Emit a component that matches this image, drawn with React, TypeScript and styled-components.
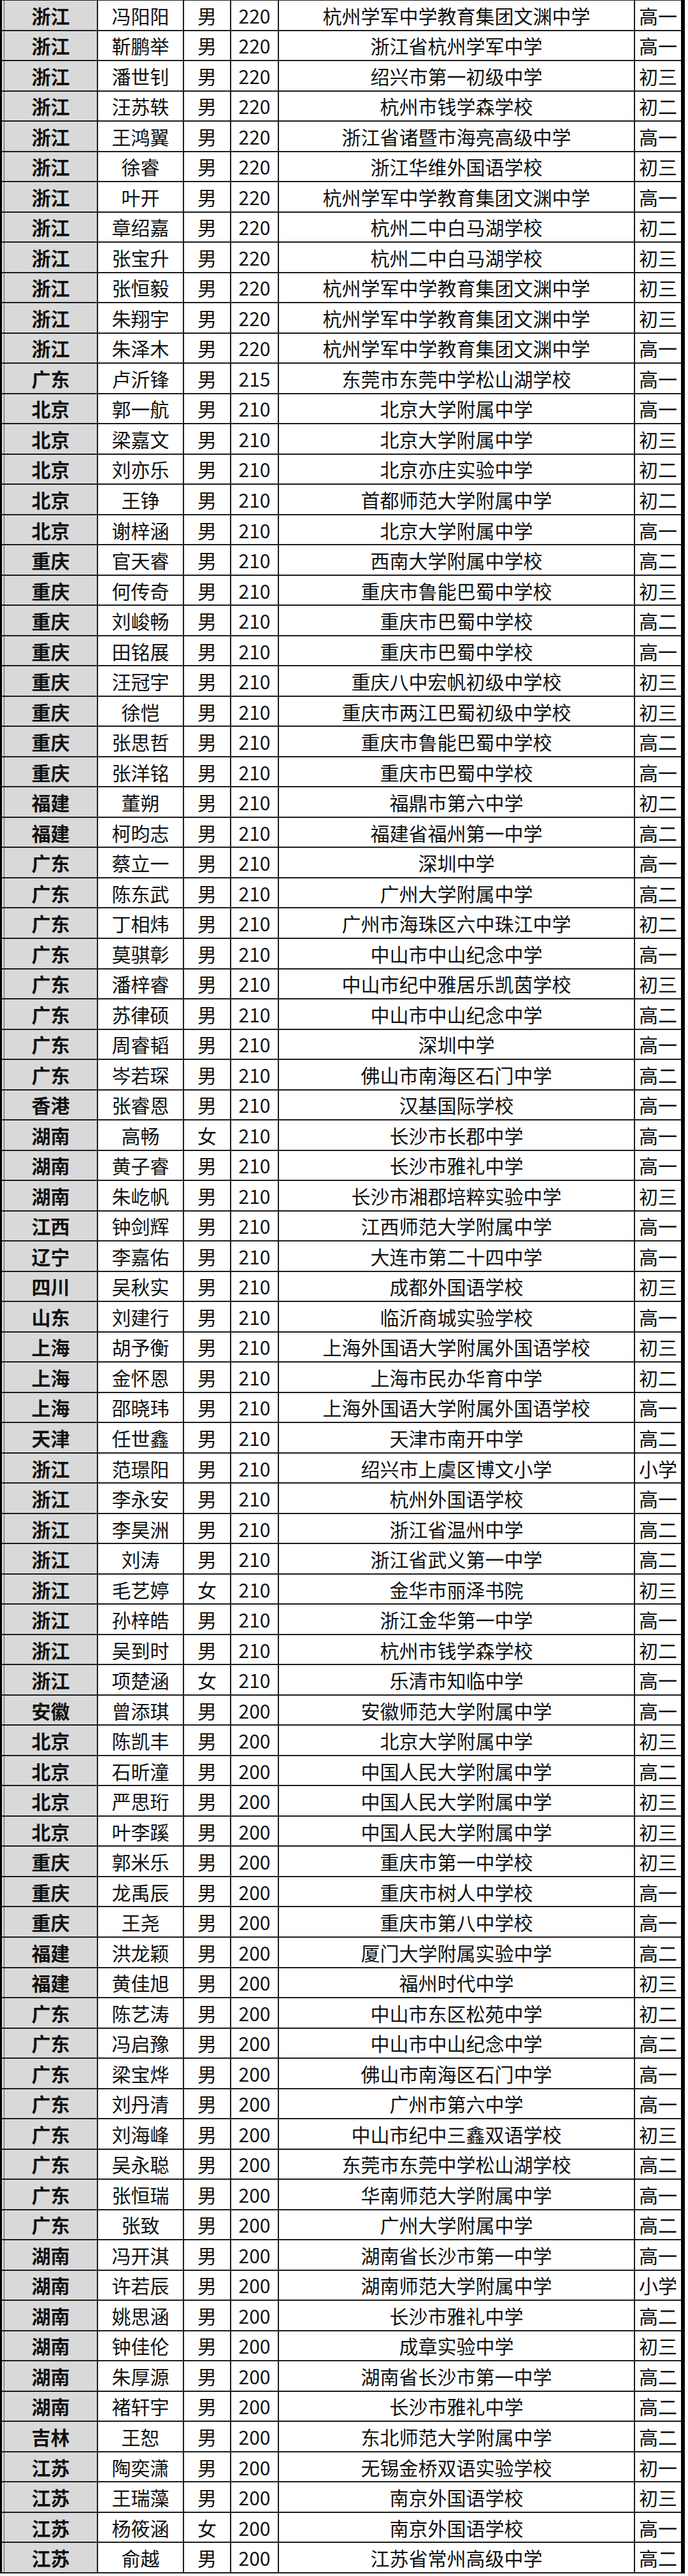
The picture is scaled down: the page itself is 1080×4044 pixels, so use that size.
import React from "react";
import styled, { createGlobalStyle } from "styled-components";

const GlobalStyle = createGlobalStyle`
  html, body {
    margin: 0;
    padding: 0;
    background: #ffffff;
  }
  body {
    font-family: "Noto Sans CJK SC", "Noto Sans", "Liberation Sans", sans-serif;
    color: #111111;
  }
`;

type Row = [string, string, string, string, string, string];

const raw = `浙江 冯阳阳 男 220 杭州学军中学教育集团文渊中学 高一
浙江 靳鹏举 男 220 浙江省杭州学军中学 高一
浙江 潘世钊 男 220 绍兴市第一初级中学 初三
浙江 汪苏轶 男 220 杭州市钱学森学校 初二
浙江 王鸿翼 男 220 浙江省诸暨市海亮高级中学 高一
浙江 徐睿 男 220 浙江华维外国语学校 初三
浙江 叶开 男 220 杭州学军中学教育集团文渊中学 高一
浙江 章绍嘉 男 220 杭州二中白马湖学校 初二
浙江 张宝升 男 220 杭州二中白马湖学校 初三
浙江 张恒毅 男 220 杭州学军中学教育集团文渊中学 初三
浙江 朱翔宇 男 220 杭州学军中学教育集团文渊中学 初三
浙江 朱泽木 男 220 杭州学军中学教育集团文渊中学 高一
广东 卢沂锋 男 215 东莞市东莞中学松山湖学校 高一
北京 郭一航 男 210 北京大学附属中学 高一
北京 梁嘉文 男 210 北京大学附属中学 初三
北京 刘亦乐 男 210 北京亦庄实验中学 初二
北京 王铮 男 210 首都师范大学附属中学 初二
北京 谢梓涵 男 210 北京大学附属中学 高一
重庆 官天睿 男 210 西南大学附属中学校 高二
重庆 何传奇 男 210 重庆市鲁能巴蜀中学校 初三
重庆 刘峻畅 男 210 重庆市巴蜀中学校 高二
重庆 田铭展 男 210 重庆市巴蜀中学校 高一
重庆 汪冠宇 男 210 重庆八中宏帆初级中学校 初三
重庆 徐恺 男 210 重庆市两江巴蜀初级中学校 初三
重庆 张思哲 男 210 重庆市鲁能巴蜀中学校 高二
重庆 张洋铭 男 210 重庆市巴蜀中学校 高一
福建 董朔 男 210 福鼎市第六中学 初二
福建 柯昀志 男 210 福建省福州第一中学 高二
广东 蔡立一 男 210 深圳中学 高一
广东 陈东武 男 210 广州大学附属中学 高二
广东 丁相炜 男 210 广州市海珠区六中珠江中学 初二
广东 莫骐彰 男 210 中山市中山纪念中学 高一
广东 潘梓睿 男 210 中山市纪中雅居乐凯茵学校 初三
广东 苏律硕 男 210 中山市中山纪念中学 高二
广东 周睿韬 男 210 深圳中学 高一
广东 岑若琛 男 210 佛山市南海区石门中学 高二
香港 张睿恩 男 210 汉基国际学校 高一
湖南 高畅 女 210 长沙市长郡中学 高一
湖南 黄子睿 男 210 长沙市雅礼中学 高一
湖南 朱屹帆 男 210 长沙市湘郡培粹实验中学 初三
江西 钟剑辉 男 210 江西师范大学附属中学 高一
辽宁 李嘉佑 男 210 大连市第二十四中学 高一
四川 吴秋实 男 210 成都外国语学校 初三
山东 刘建行 男 210 临沂商城实验学校 高一
上海 胡予衡 男 210 上海外国语大学附属外国语学校 初三
上海 金怀恩 男 210 上海市民办华育中学 初二
上海 邵晓玮 男 210 上海外国语大学附属外国语学校 高一
天津 任世鑫 男 210 天津市南开中学 高二
浙江 范璟阳 男 210 绍兴市上虞区博文小学 小学
浙江 李永安 男 210 杭州外国语学校 高一
浙江 李昊洲 男 210 浙江省温州中学 高二
浙江 刘涛 男 210 浙江省武义第一中学 高二
浙江 毛艺婷 女 210 金华市丽泽书院 初三
浙江 孙梓皓 男 210 浙江金华第一中学 高一
浙江 吴到时 男 210 杭州市钱学森学校 初二
浙江 项楚涵 女 210 乐清市知临中学 高一
安徽 曾添琪 男 200 安徽师范大学附属中学 高一
北京 陈凯丰 男 200 北京大学附属中学 初三
北京 石昕潼 男 200 中国人民大学附属中学 高二
北京 严思珩 男 200 中国人民大学附属中学 初三
北京 叶李蹊 男 200 中国人民大学附属中学 初三
重庆 郭米乐 男 200 重庆市第一中学校 初三
重庆 龙禹辰 男 200 重庆市树人中学校 高一
重庆 王尧 男 200 重庆市第八中学校 高一
福建 洪龙颖 男 200 厦门大学附属实验中学 高二
福建 黄佳旭 男 200 福州时代中学 初三
广东 陈艺涛 男 200 中山市东区松苑中学 初二
广东 冯启豫 男 200 中山市中山纪念中学 高二
广东 梁宝烨 男 200 佛山市南海区石门中学 高一
广东 刘丹清 男 200 广州市第六中学 高一
广东 刘海峰 男 200 中山市纪中三鑫双语学校 初三
广东 吴永聪 男 200 东莞市东莞中学松山湖学校 高二
广东 张恒瑞 男 200 华南师范大学附属中学 高一
广东 张致 男 200 广州大学附属中学 高二
湖南 冯开淇 男 200 湖南省长沙市第一中学 高一
湖南 许若辰 男 200 湖南师范大学附属中学 小学
湖南 姚思涵 男 200 长沙市雅礼中学 高二
湖南 钟佳伦 男 200 成章实验中学 初三
湖南 朱厚源 男 200 湖南省长沙市第一中学 高二
湖南 褚轩宇 男 200 长沙市雅礼中学 高二
吉林 王恕 男 200 东北师范大学附属中学 高二
江苏 陶奕潇 男 200 无锡金桥双语实验学校 初一
江苏 王瑞藻 男 200 南京外国语学校 初三
江苏 杨筱涵 女 200 南京外国语学校 高一
江苏 俞越 男 200 江苏省常州高级中学 高二`;

const rows: Row[] = raw.split("\n").map((l) => l.trim().split(/\s+/) as Row);

const Page = styled.div`
  width: 1080px;
  min-height: 4044px;
  background: #ffffff;
`;

const Table = styled.div`
  width: 1075px;
  box-sizing: border-box;
  border-left: 3px solid #000000;
  border-right: 6px solid #000000;
  border-top: 1.5px solid #1e1e1e;
  display: flex;
  flex-direction: column;
`;

const RowLine = styled.div`
  display: grid;
  grid-template-columns: 151px 135px 74px 75px 559px 72px;
  height: 47.52px;
  box-sizing: border-box;
  border-bottom: 2.5px solid #1c1c1c;
`;

const Cell = styled.div<{ $head?: boolean; $last?: boolean }>`
  box-sizing: border-box;
  display: flex;
  align-items: center;
  justify-content: center;
  white-space: nowrap;
  overflow: hidden;
  font-size: 30px;
  line-height: 1;
  color: #111111;
  font-weight: ${(p) => (p.$head ? 700 : 400)};
  background: ${(p) =>
    p.$head
      ? "linear-gradient(to right, #d9d9d9 0, #d9d9d9 3px, #5a5a5a 3px, #5a5a5a 4px, #d9d9d9 4px)"
      : "#ffffff"};
  border-right: ${(p) => (p.$last ? "none" : "2px solid #1c1c1c")};
  padding-left: ${(p) => (p.$head ? "4px" : "0")};
`;

export default function App() {
  return (
    <>
      <GlobalStyle />
      <Page>
        <Table>
          {rows.map((r, i) => (
            <RowLine key={i}>
              <Cell $head>{r[0]}</Cell>
              <Cell>{r[1]}</Cell>
              <Cell>{r[2]}</Cell>
              <Cell>{r[3]}</Cell>
              <Cell>{r[4]}</Cell>
              <Cell $last>{r[5]}</Cell>
            </RowLine>
          ))}
        </Table>
      </Page>
    </>
  );
}
